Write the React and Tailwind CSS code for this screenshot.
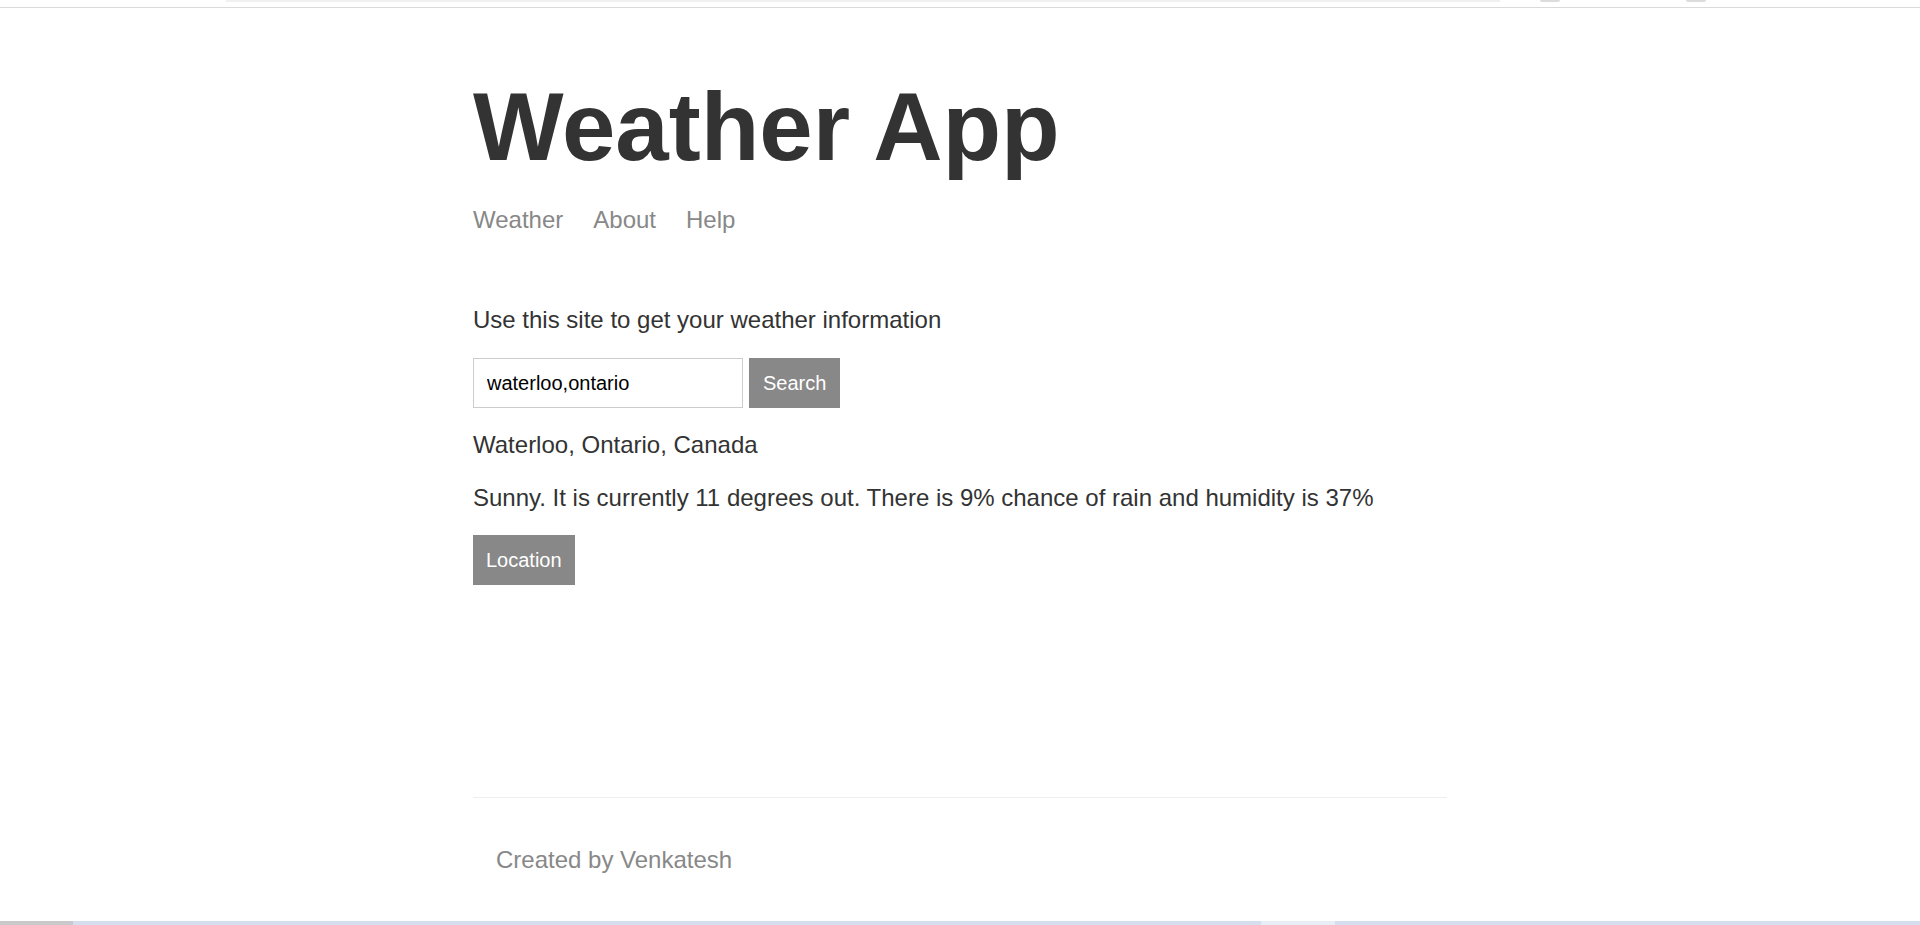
import React, { useState } from 'react';

const App = () => {
  const [query, setQuery] = useState('waterloo,ontario');

  return (
    <div className="w-full h-[925px] bg-white flex flex-col overflow-hidden font-['Liberation_Sans',Arial,sans-serif] text-[#333]">
      {/* browser chrome leftover at the top */}
      <div className="h-[8px] shrink-0 relative border-b border-[#dadada]">
        <div className="absolute top-0 left-[226px] w-[1274px] h-[2px] bg-[#f0f0f0]" />
        <div className="absolute top-0 left-[1540px] w-[20px] h-[2px] rounded-b-full bg-[#dcdcdc]" />
        <div className="absolute top-0 left-[1686px] w-[20px] h-[2px] rounded-b-full bg-[#dcdcdc]" />
      </div>

      <div className="flex-1 w-[974px] mx-auto flex flex-col">
        <header>
          <h1 className="mt-[71px] text-[96px] leading-[96px] font-bold text-[#333]">Weather App</h1>
          <nav className="mt-[29px] flex gap-[30px] text-[24px] leading-[32px] text-[#888]">
            <a href="#">Weather</a>
            <a href="#">About</a>
            <a href="#">Help</a>
          </nav>
        </header>

        <main className="flex flex-col items-start">
          <p className="mt-[68px] text-[24px] leading-[32px]">Use this site to get your weather information</p>

          <form className="mt-[22px] flex gap-[6px]" onSubmit={(e) => e.preventDefault()}>
            <input
              value={query}
              onChange={(e) => setQuery(e.target.value)}
              className="w-[270px] h-[50px] border border-[#cccccc] px-[13px] text-[20px] text-black outline-none"
            />
            <button className="h-[50px] px-[14px] bg-[#888888] text-white text-[20px]">Search</button>
          </form>

          <p className="mt-[21px] text-[24px] leading-[32px]">Waterloo, Ontario, Canada</p>
          <p className="mt-[21px] text-[24px] leading-[32px]">
            Sunny. It is currently 11 degrees out. There is 9% chance of rain and humidity is 37%
          </p>

          <button className="mt-[21px] h-[50px] px-[13px] bg-[#888888] text-white text-[20px]">Location</button>
        </main>

        <footer className="mt-[212px] border-t border-[#eeeeee]">
          <p className="mt-[46px] pl-[23px] text-[24px] leading-[32px] text-[#888]">Created by Venkatesh</p>
        </footer>
      </div>

      {/* taskbar strip at the bottom */}
      <div className="h-[4px] shrink-0 flex">
        <div className="w-[73px] bg-[#c9c9c9]" />
        <div className="w-[1188px] bg-[#d5ddee]" />
        <div className="w-[74px] bg-[#e9edf5]" />
        <div className="flex-1 bg-[#d5ddee]" />
      </div>
    </div>
  );
};

export default App;
